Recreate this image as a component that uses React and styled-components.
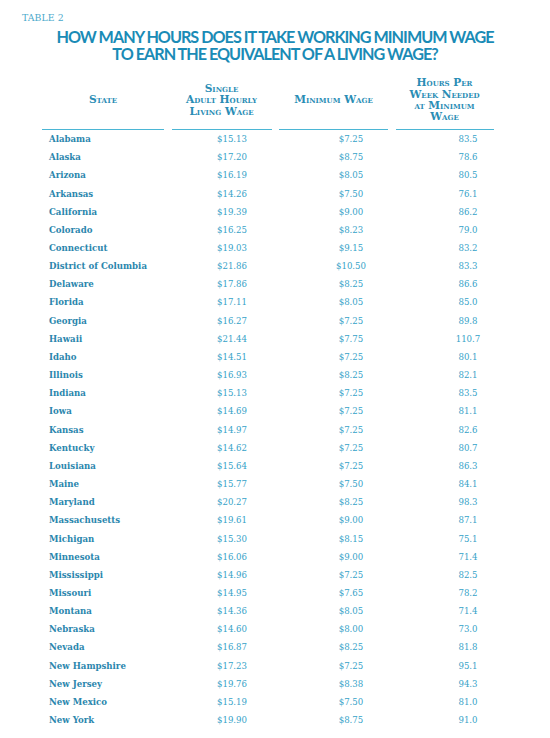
import React from "react";
import styled, { createGlobalStyle } from "styled-components";

const GlobalStyle = createGlobalStyle`
  body {
    margin: 0;
    background: #ffffff;
  }
`;

const Page = styled.div`
  width: 550px;
  height: 738px;
  overflow: hidden;
  background: #ffffff;
  font-family: "DejaVu Serif", "Liberation Serif", serif;
`;

const Label = styled.div`
  padding: 12px 0 0 22px;
  font-size: 9.3px;
  line-height: 11px;
  color: #4aa9cb;
  letter-spacing: 0.1px;
`;

const Title = styled.h1`
  margin: 5px 0 0;
  text-align: center;
  font-family: "Lato", "Open Sans", sans-serif;
  font-weight: 700;
  font-size: 16.2px;
  line-height: 17px;
  letter-spacing: -1px;
  color: #1a8bb6;
`;

const HeadRow = styled.div`
  display: grid;
  grid-template-columns: 122px 100px 109px 98px;
  column-gap: 7.5px;
  margin: 15px 0 0 42px;
  width: 451px;
`;

const HeadCell = styled.div`
  display: flex;
  align-items: center;
  justify-content: center;
  height: 46px;
  padding-bottom: 6px;
  border-bottom: 1.5px solid #4bb6d5;
  text-align: center;
  font-weight: bold;
  font-variant: small-caps;
  font-size: 10.6px;
  line-height: 11.3px;
  color: #2a8db5;
`;

const Row = styled.div`
  display: grid;
  grid-template-columns: 150px 66px 172px 62px;
  align-items: center;
  height: 18.16px;
  padding-left: 49px;
`;

const StateName = styled.div`
  font-weight: bold;
  font-size: 8.6px;
  color: #2a86ad;
  white-space: nowrap;
`;

const Num = styled.div`
  text-align: center;
  font-size: 8.6px;
  color: #35a2c8;
`;

const rows = [
  ["Alabama", "$15.13", "$7.25", "83.5"],
  ["Alaska", "$17.20", "$8.75", "78.6"],
  ["Arizona", "$16.19", "$8.05", "80.5"],
  ["Arkansas", "$14.26", "$7.50", "76.1"],
  ["California", "$19.39", "$9.00", "86.2"],
  ["Colorado", "$16.25", "$8.23", "79.0"],
  ["Connecticut", "$19.03", "$9.15", "83.2"],
  ["District of Columbia", "$21.86", "$10.50", "83.3"],
  ["Delaware", "$17.86", "$8.25", "86.6"],
  ["Florida", "$17.11", "$8.05", "85.0"],
  ["Georgia", "$16.27", "$7.25", "89.8"],
  ["Hawaii", "$21.44", "$7.75", "110.7"],
  ["Idaho", "$14.51", "$7.25", "80.1"],
  ["Illinois", "$16.93", "$8.25", "82.1"],
  ["Indiana", "$15.13", "$7.25", "83.5"],
  ["Iowa", "$14.69", "$7.25", "81.1"],
  ["Kansas", "$14.97", "$7.25", "82.6"],
  ["Kentucky", "$14.62", "$7.25", "80.7"],
  ["Louisiana", "$15.64", "$7.25", "86.3"],
  ["Maine", "$15.77", "$7.50", "84.1"],
  ["Maryland", "$20.27", "$8.25", "98.3"],
  ["Massachusetts", "$19.61", "$9.00", "87.1"],
  ["Michigan", "$15.30", "$8.15", "75.1"],
  ["Minnesota", "$16.06", "$9.00", "71.4"],
  ["Mississippi", "$14.96", "$7.25", "82.5"],
  ["Missouri", "$14.95", "$7.65", "78.2"],
  ["Montana", "$14.36", "$8.05", "71.4"],
  ["Nebraska", "$14.60", "$8.00", "73.0"],
  ["Nevada", "$16.87", "$8.25", "81.8"],
  ["New Hampshire", "$17.23", "$7.25", "95.1"],
  ["New Jersey", "$19.76", "$8.38", "94.3"],
  ["New Mexico", "$15.19", "$7.50", "81.0"],
  ["New York", "$19.90", "$8.75", "91.0"],
];

const App = () => {
  return (
    <Page>
      <GlobalStyle />
      <Label>TABLE 2</Label>
      <Title>
        HOW MANY HOURS DOES IT TAKE WORKING MINIMUM WAGE
        <br />
        TO EARN THE EQUIVALENT OF A LIVING WAGE?
      </Title>
      <HeadRow>
        <HeadCell>State</HeadCell>
        <HeadCell>
          Single
          <br />
          Adult Hourly
          <br />
          Living Wage
        </HeadCell>
        <HeadCell>Minimum Wage</HeadCell>
        <HeadCell>
          Hours Per
          <br />
          Week Needed
          <br />
          at Minimum
          <br />
          Wage
        </HeadCell>
      </HeadRow>
      <div>
        {rows.map((r) => (
          <Row key={r[0]}>
            <StateName>{r[0]}</StateName>
            <Num>{r[1]}</Num>
            <Num>{r[2]}</Num>
            <Num>{r[3]}</Num>
          </Row>
        ))}
      </div>
    </Page>
  );
};

export default App;
